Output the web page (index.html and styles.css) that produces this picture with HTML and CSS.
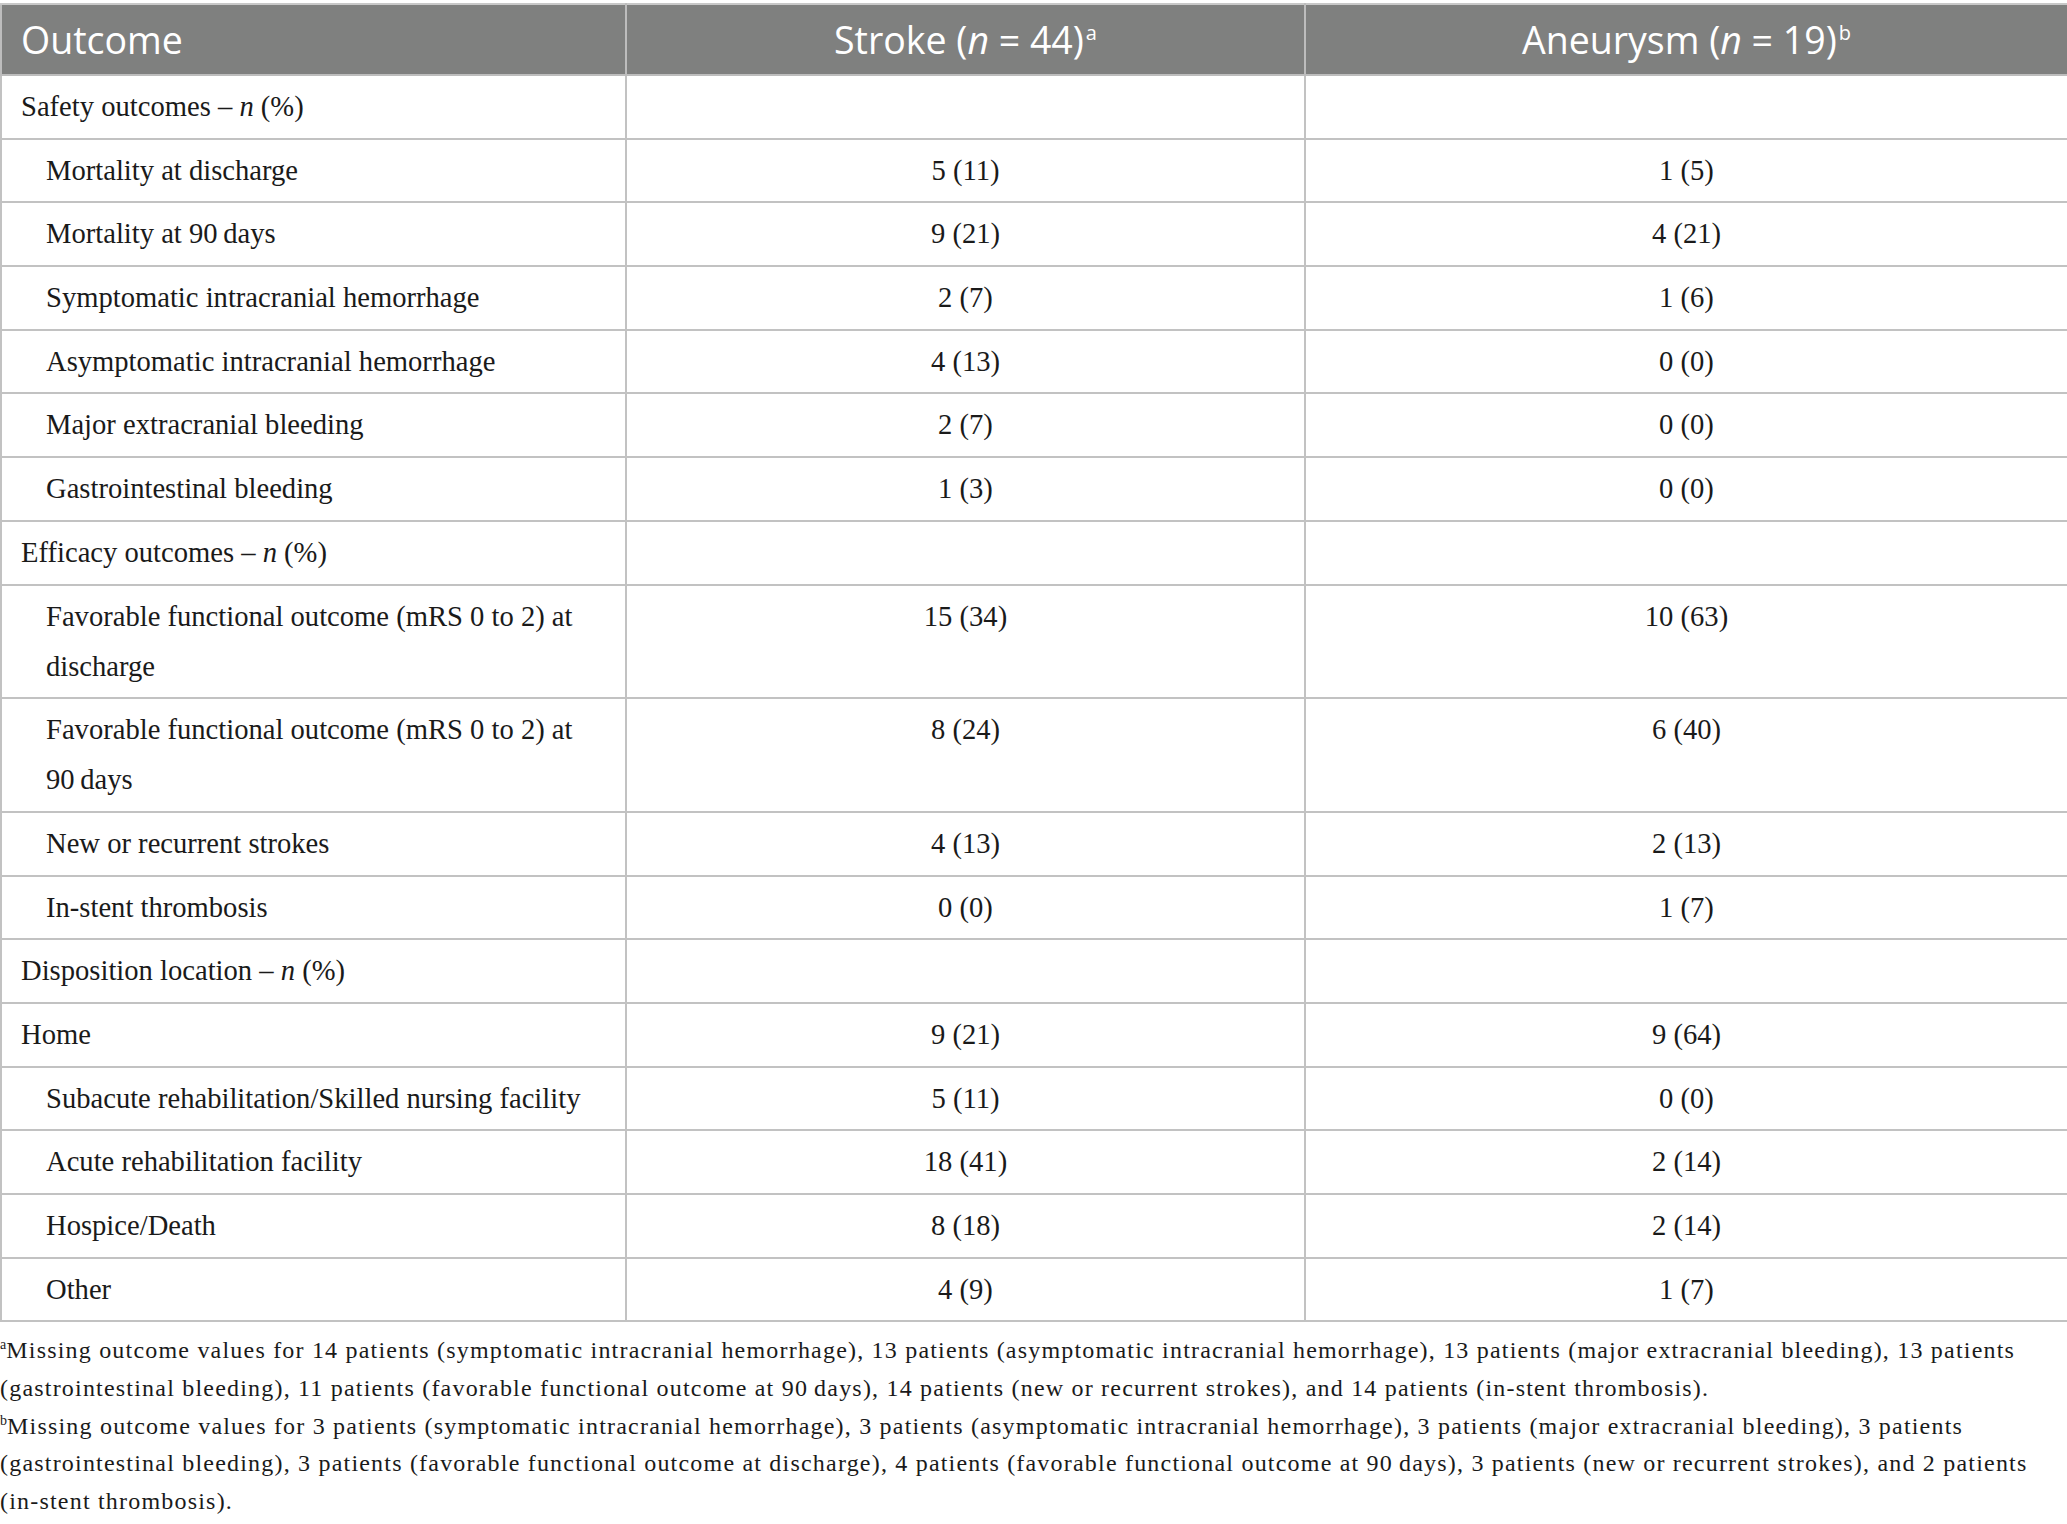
FILE: index.html
```html
<!DOCTYPE html>
<html lang="en">
<head>
<meta charset="utf-8">
<title>Outcomes</title>
<link rel="stylesheet" href="styles.css">
</head>
<body>
<div class="page">
<table class="outcomes">
  <colgroup>
    <col class="c1">
    <col class="c2">
    <col class="c3">
  </colgroup>
  <thead>
    <tr>
      <th class="left">Outcome</th>
      <th>Stroke (<i>n</i> = 44)<sup>a</sup></th>
      <th>Aneurysm (<i>n</i> = 19)<sup>b</sup></th>
    </tr>
  </thead>
  <tbody>
    <tr class="section"><td>Safety outcomes – <i>n</i> (%)</td><td></td><td></td></tr>
    <tr><td class="ind">Mortality at discharge</td><td>5 (11)</td><td>1 (5)</td></tr>
    <tr><td class="ind">Mortality at <span class="nw">90&#8201;days</span></td><td>9 (21)</td><td>4 (21)</td></tr>
    <tr><td class="ind">Symptomatic intracranial hemorrhage</td><td>2 (7)</td><td>1 (6)</td></tr>
    <tr><td class="ind">Asymptomatic intracranial hemorrhage</td><td>4 (13)</td><td>0 (0)</td></tr>
    <tr><td class="ind">Major extracranial bleeding</td><td>2 (7)</td><td>0 (0)</td></tr>
    <tr><td class="ind">Gastrointestinal bleeding</td><td>1 (3)</td><td>0 (0)</td></tr>
    <tr class="section"><td>Efficacy outcomes – <i>n</i> (%)</td><td></td><td></td></tr>
    <tr class="top"><td class="ind">Favorable functional outcome (mRS 0 to 2) at discharge</td><td>15 (34)</td><td>10 (63)</td></tr>
    <tr class="top"><td class="ind">Favorable functional outcome (mRS 0 to 2) at <span class="nw">90&#8201;days</span></td><td>8 (24)</td><td>6 (40)</td></tr>
    <tr><td class="ind">New or recurrent strokes</td><td>4 (13)</td><td>2 (13)</td></tr>
    <tr><td class="ind">In-stent thrombosis</td><td>0 (0)</td><td>1 (7)</td></tr>
    <tr class="section"><td>Disposition location – <i>n</i> (%)</td><td></td><td></td></tr>
    <tr><td>Home</td><td>9 (21)</td><td>9 (64)</td></tr>
    <tr><td class="ind">Subacute rehabilitation/Skilled nursing facility</td><td>5 (11)</td><td>0 (0)</td></tr>
    <tr><td class="ind">Acute rehabilitation facility</td><td>18 (41)</td><td>2 (14)</td></tr>
    <tr><td class="ind">Hospice/Death</td><td>8 (18)</td><td>2 (14)</td></tr>
    <tr><td class="ind">Other</td><td>4 (9)</td><td>1 (7)</td></tr>
  </tbody>
</table>
<div class="notes">
  <p><sup>a</sup>Missing outcome values for 14 patients (symptomatic intracranial hemorrhage), 13 patients (asymptomatic intracranial hemorrhage), 13 patients (major extracranial bleeding), 13 patients (gastrointestinal bleeding), 11 patients (favorable functional outcome at <span class="nw">90&#8201;days</span>), 14 patients (new or recurrent strokes), and 14 patients <span class="nw">(in-stent</span> thrombosis).</p>
  <p><sup>b</sup>Missing outcome values for 3 patients (symptomatic intracranial hemorrhage), 3 patients (asymptomatic intracranial hemorrhage), 3 patients (major extracranial bleeding), 3 patients (gastrointestinal bleeding), 3 patients (favorable functional outcome at discharge), 4 patients (favorable functional outcome at <span class="nw">90&#8201;days</span>), 3 patients (new or recurrent strokes), and 2 patients <span class="nw">(in-stent</span> thrombosis).</p>
</div>
</div>
</body>
</html>
```

FILE: styles.css
```css
html, body {
  margin: 0;
  padding: 0;
  background: #ffffff;
}

.page {
  padding-top: 3px;
  width: 2067px;
}

.nw {
  white-space: nowrap;
}

.outcomes {
  width: 2067px;
  border-collapse: collapse;
  table-layout: fixed;
  font-family: "Liberation Serif", "Times New Roman", serif;
  font-size: 28.6px;
  color: #1a1a1a;
}

.c1 { width: 625px; }
.c2 { width: 679px; }
.c3 { width: 763px; }

.outcomes th {
  background: #7f807f;
  color: #ffffff;
  font-family: "Open Sans", "Liberation Sans", sans-serif;
  font-weight: 400;
  font-size: 37.5px;
  line-height: 50px;
  padding: 10px 0 9px;
  text-align: center;
  border: 2px solid #bdbdbd;
  border-top-color: #c8c8c8;
}

.outcomes th.left {
  text-align: left;
  padding-left: 19px;
}

.outcomes th sup {
  font-size: 20px;
  line-height: 0;
  vertical-align: 14px;
  margin-left: 2px;
}

.outcomes td {
  border: 2px solid #c2c2c2;
  line-height: 50px;
  padding: 6px 0 5.7px;
  text-align: center;
  vertical-align: middle;
}

.outcomes td:first-child {
  text-align: left;
  padding-left: 19px;
  padding-right: 20px;
}

.outcomes td.ind {
  padding-left: 44px;
}

.outcomes tr.top td {
  vertical-align: top;
}

.notes {
  margin-top: 10px;
  width: 2060px;
  font-family: "Liberation Serif", "Times New Roman", serif;
  font-size: 24px;
  letter-spacing: 1.2px;
  line-height: 37.6px;
  color: #1a1a1a;
}

.notes p {
  margin: 0;
}

.notes sup {
  font-size: 14px;
  line-height: 0;
  vertical-align: 9px;
  letter-spacing: 0;
}
```
